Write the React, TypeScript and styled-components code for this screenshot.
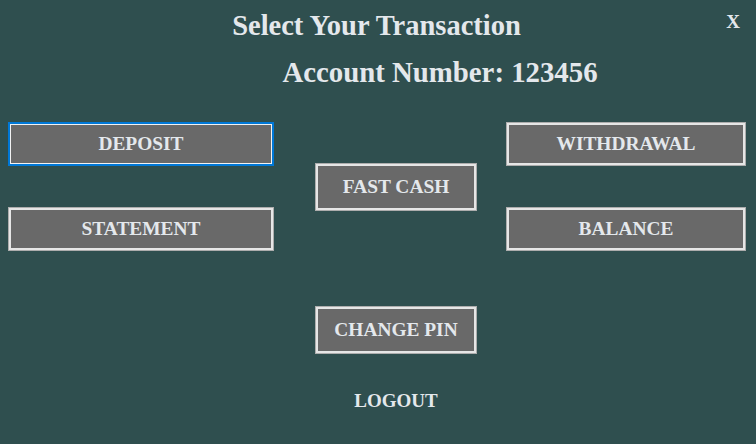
import React from "react";
import styled, { createGlobalStyle, css } from "styled-components";

const GlobalStyle = createGlobalStyle`
  html, body { margin: 0; padding: 0; background: #2f4f4f; }
  body { width: 756px; height: 444px; overflow: hidden; }
`;

const Page = styled.div`
  width: 756px;
  height: 444px;
  background: #2f4f4f;
  display: flex;
  flex-direction: column;
  font-family: "Liberation Serif", "Times New Roman", serif;
  font-weight: bold;
  color: #e4e8ec;
`;

const Header = styled.header`
  display: grid;
  grid-template-columns: 1fr auto 1fr;
  align-items: start;
  padding-top: 12px;
`;

const Title = styled.h1`
  grid-column: 2;
  margin: 0 3px 0 0;
  font-size: 28.5px;
  line-height: 28px;
  font-weight: bold;
`;

const CloseButton = styled.button`
  grid-column: 3;
  justify-self: end;
  margin: 0 16px 0 0;
  padding: 0;
  border: none;
  background: transparent;
  color: inherit;
  font: inherit;
  font-size: 19px;
  line-height: 19px;
  cursor: pointer;
`;

const AccountLine = styled.h2`
  margin: 18px 0 0;
  padding-left: 124px;
  text-align: center;
  font-size: 28.8px;
  line-height: 28px;
  font-weight: bold;
`;

const Body = styled.main`
  display: flex;
  align-items: flex-start;
  padding-left: 8px;
  margin-top: 36px;
`;

const Column = styled.div<{ $width: number; $offset?: number; $gap?: number; $top?: number }>`
  display: flex;
  flex-direction: column;
  align-items: stretch;
  width: ${(p) => p.$width}px;
  margin-left: ${(p) => p.$offset ?? 0}px;
  padding-top: ${(p) => p.$top ?? 0}px;
  gap: ${(p) => p.$gap ?? 0}px;
`;

const ActionButton = styled.button<{ $height: number; $focused?: boolean; $space?: number }>`
  box-sizing: border-box;
  height: ${(p) => p.$height}px;
  margin-top: ${(p) => p.$space ?? 0}px;
  background: #696969;
  color: #e4e8ec;
  font-family: "Liberation Serif", "Times New Roman", serif;
  font-weight: bold;
  font-size: 19.4px;
  padding: 0;
  border: 1px solid #adadad;
  box-shadow: inset 0 0 0 2px #e6e6e6;
  cursor: pointer;
  ${(p) =>
    p.$focused &&
    css`
      border: 2px solid #0078d7;
      box-shadow: inset 0 0 0 1px #f2f2f2;
    `}
`;

const LinkButton = styled.button<{ $space?: number }>`
  height: 48px;
  margin-top: ${(p) => p.$space ?? 0}px;
  background: transparent;
  border: none;
  padding: 0;
  color: #e4e8ec;
  font-family: "Liberation Serif", "Times New Roman", serif;
  font-weight: bold;
  font-size: 19px;
  cursor: pointer;
`;

export default function App() {
  return (
    <>
      <GlobalStyle />
      <Page>
        <Header>
          <Title>Select Your Transaction</Title>
          <CloseButton>X</CloseButton>
        </Header>
        <AccountLine>Account Number: 123456</AccountLine>
        <Body>
          <Column $width={266} $gap={41}>
            <ActionButton $height={44} $focused>DEPOSIT</ActionButton>
            <ActionButton $height={44}>STATEMENT</ActionButton>
          </Column>
          <Column $width={162} $offset={41} $top={41}>
            <ActionButton $height={48}>FAST CASH</ActionButton>
            <ActionButton $height={48} $space={95}>CHANGE PIN</ActionButton>
            <LinkButton $space={23}>LOGOUT</LinkButton>
          </Column>
          <Column $width={240} $offset={29} $gap={41}>
            <ActionButton $height={44}>WITHDRAWAL</ActionButton>
            <ActionButton $height={44}>BALANCE</ActionButton>
          </Column>
        </Body>
      </Page>
    </>
  );
}
